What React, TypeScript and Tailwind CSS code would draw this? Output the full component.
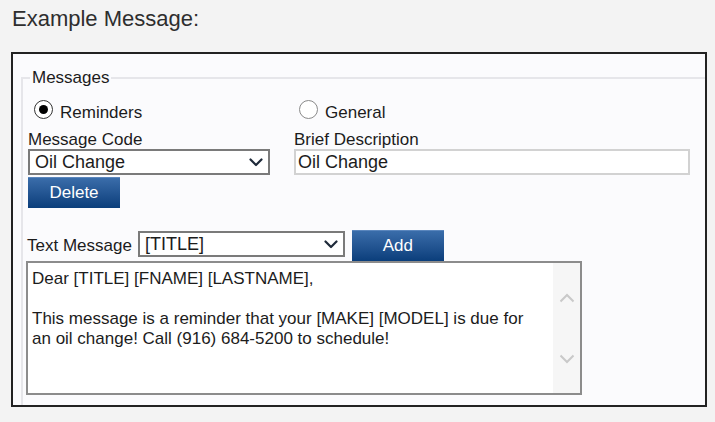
const font = "font-['Liberation_Sans',Arial,sans-serif]";

function Radio({ checked, label }: { checked?: boolean; label: string }) {
  return (
    <label className="flex h-[22px] items-start gap-[7px]">
      <span
        className={`flex h-[19px] w-[19px] items-center justify-center rounded-full border bg-white ${
          checked ? "border-[#333]" : "border-[#8a8a8a]"
        }`}
      >
        {checked && <span className="h-[9px] w-[9px] rounded-full bg-black" />}
      </span>
      <span className="mt-[3px] text-[17px] leading-[20px]">{label}</span>
    </label>
  );
}

function Chevron({ className = "" }: { className?: string }) {
  return (
    <svg viewBox="0 0 14 9" className={className} fill="none">
      <path d="M1.5 1.5 7 7l5.5-5.5" stroke="#1f2a3a" strokeWidth="2.2" strokeLinecap="round" strokeLinejoin="round" />
    </svg>
  );
}

function FakeSelect({ value, width }: { value: string; width: string }) {
  return (
    <div
      className={`flex h-[26px] ${width} items-center justify-between border-2 border-[#7a7a7a] bg-white pl-[5px] pr-[5px] text-[18px] leading-[20px]`}
    >
      <span>{value}</span>
      <Chevron className="h-[9px] w-[14px]" />
    </div>
  );
}

function BlueButton({ label, className = "" }: { label: string; className?: string }) {
  return (
    <button
      className={`flex items-center justify-center border-t border-[#5a86bd] bg-gradient-to-b from-[#3a6daa] to-[#0a3e7b] text-[17px] text-white ${className}`}
    >
      {label}
    </button>
  );
}

export default function App() {
  return (
    <div className={`min-h-screen bg-[#f3f3f3] pt-[6px] text-[#1c1c1c] ${font}`}>
      <h1 className="ml-[12px] text-[22px] leading-[26px] text-[#2e2e2e]">Example Message:</h1>

      <div className="ml-[11px] mt-[20px] h-[355px] w-[696px] border-2 border-[#222] bg-[#fbfbfd] pl-[8px]">
        <div className="mt-[23px] h-[328px] border-l-2 border-t-2 border-[#e6e6ea]">
          <div className="-mt-[11px] ml-[7px] w-fit bg-[#fbfbfd] px-[2px] text-[17px] leading-[20px]">Messages</div>

          <div className="mt-[12px] flex pl-[11px]">
            <div className="w-[265px]">
              <Radio checked label="Reminders" />
            </div>
            <Radio label="General" />
          </div>

          <div className="mt-[8px] flex pl-[5px]">
            <div className="w-[266px]">
              <div className="text-[17px] leading-[19px]">Message Code</div>
              <FakeSelect value="Oil Change" width="w-[242px]" />
              <BlueButton label="Delete" className="mt-[2px] h-[31px] w-[92px]" />
            </div>
            <div>
              <div className="text-[17px] leading-[19px]">Brief Description</div>
              <div className="flex h-[26px] w-[396px] items-center border-2 border-[#d2d2d2] bg-white pl-[2px] text-[18px]">
                Oil Change
              </div>
            </div>
          </div>

          <div className="mt-[22px] flex items-start pl-[4px]">
            <span className="mt-[6px] text-[17px] leading-[20px]">Text Message</span>
            <div className="ml-[6px] mt-[1px]">
              <FakeSelect value="[TITLE]" width="w-[207px]" />
            </div>
            <BlueButton label="Add" className="ml-[7px] h-[31px] w-[92px]" />
          </div>

          <div className="ml-[3px] flex h-[134px] w-[556px] border-2 border-[#8c8c8c] bg-white">
            <div className="flex-1 pl-[4px] pt-[6px] text-[17px] leading-[20px]">
              <p>Dear [TITLE] [FNAME] [LASTNAME],</p>
              <p>&nbsp;</p>
              <p>This message is a reminder that your [MAKE] [MODEL] is due for</p>
              <p>an oil change! Call (916) 684-5200 to schedule!</p>
            </div>
            <div className="flex w-[27px] flex-col items-center bg-[#f6f6f6] pt-[30px]">
              <svg viewBox="0 0 16 10" className="h-[10px] w-[16px]" fill="none">
                <path d="M1.5 8.5 8 2l6.5 6.5" stroke="#c9c9c9" strokeWidth="2" />
              </svg>
              <svg viewBox="0 0 16 10" className="mt-[51px] h-[10px] w-[16px]" fill="none">
                <path d="M1.5 1.5 8 8l6.5-6.5" stroke="#c9c9c9" strokeWidth="2" />
              </svg>
            </div>
          </div>
        </div>
      </div>
    </div>
  );
}
